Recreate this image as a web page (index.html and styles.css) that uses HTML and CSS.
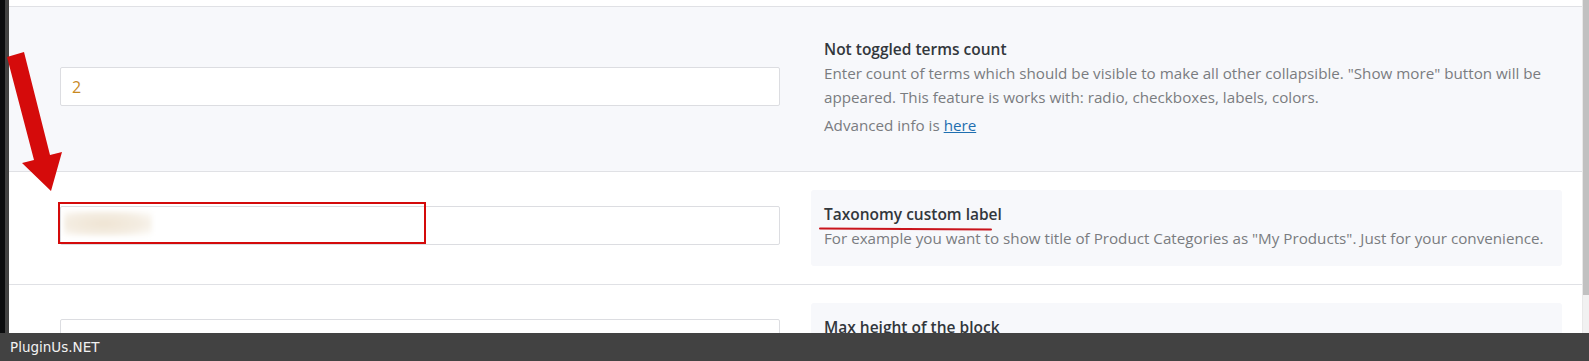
FILE: index.html
```html
<!DOCTYPE html>
<html lang="en">
<head>
    <meta charset="UTF-8">
    <meta name="viewport" content="width=device-width, initial-scale=1.0">
    <title>Filter options</title>
    <link rel="stylesheet" href="styles.css">
</head>
<body>
    <div class="frame">
        <div class="edge-dark"></div>
        <div class="edge-gray"></div>
        <div class="settings">
            <div class="prev-row"></div>

            <div class="option-row shaded">
                <div class="field">
                    <input type="text" class="text-input" value="2">
                </div>
                <div class="option-info">
                    <h4 class="option-title">Not toggled terms count</h4>
                    <p class="option-desc">Enter count of terms which should be visible to make all other collapsible. "Show more" button will be appeared. This feature is works with: radio, checkboxes, labels, colors.</p>
                    <p class="option-desc more">Advanced info is <a href="#">here</a></p>
                </div>
            </div>

            <div class="option-row">
                <div class="field">
                    <div class="text-input blurred-input"><span class="blurred"></span></div>
                    <span class="mark-box"></span>
                </div>
                <div class="option-info boxed">
                    <h4 class="option-title"><span class="underlined">Taxonomy custom label<span class="pen-line"></span></span></h4>
                    <p class="option-desc">For example you want to show title of Product Categories as "My Products". Just for your convenience.</p>
                </div>
            </div>

            <div class="option-row">
                <div class="field">
                    <input type="text" class="text-input" value="">
                </div>
                <div class="option-info boxed">
                    <h4 class="option-title">Max height of the block</h4>
                    <p class="option-desc">Container max-height (px). 0 means no max-height.</p>
                </div>
            </div>
        </div>
        <div class="scrollbar"><div class="thumb"></div></div>
    </div>

    <!-- annotation arrow drawn over the screenshot -->
    <svg class="arrow" width="70" height="200" viewBox="0 0 70 200">
        <polygon points="7,57 24,52 50,155 62,152 51,191 22,163 34,160" fill="#d50b0b"/>
    </svg>

    <div class="watermark">PluginUs.NET</div>
</body>
</html>
```

FILE: styles.css
```css
body {
    margin: 0;
    background-color: #fff;
    font-family: "Open Sans", sans-serif;
    overflow: hidden;
}
.frame {
    display: flex;
    height: 361px;
    overflow: hidden;
}
.edge-dark {
    width: 5px;
    background-color: #0b0c0e;
}
.edge-gray {
    width: 4px;
    background-color: #424242;
}
.settings {
    flex: 1;
    min-width: 0;
}
.prev-row {
    height: 6px;
    border-bottom: 1px solid #e0e1e5;
}
.option-row {
    display: grid;
    grid-template-columns: 720px 1fr;
    column-gap: 31px;
    align-items: center;
    padding: 18px 20px 18px 51px;
    border-bottom: 1px solid #e0e1e5;
    background-color: #fff;
}
.option-row.shaded {
    background-color: #f7f8fb;
}
.field {
    position: relative;
    margin-bottom: 5px;
}
.text-input {
    display: block;
    width: 100%;
    height: 39px;
    box-sizing: border-box;
    padding: 0 11px;
    border: 1px solid #dcdde1;
    border-radius: 2px;
    background-color: #fff;
    color: #c8891f;
    font-family: "Open Sans", sans-serif;
    font-size: 16px;
    outline: none;
}
.blurred-input {
    padding: 4px 3px;
}
.blurred {
    display: block;
    width: 88px;
    height: 25px;
    background: radial-gradient(ellipse at 45% 50%, #efe4d3 0%, #f4ede2 55%, #fff 100%);
    filter: blur(2px);
}
.mark-box {
    position: absolute;
    left: -2px;
    top: -4px;
    width: 368px;
    height: 42px;
    box-sizing: border-box;
    border: 2px solid #d40a0a;
}
.option-info {
    padding: 12px 13px 16px;
    border-radius: 3px;
}
.option-info.boxed {
    background-color: #f7f8fb;
}
.option-title {
    margin: 0;
    font-size: 15.5px;
    line-height: 24px;
    font-weight: 600;
    color: #32373c;
}
.option-desc {
    margin: 0;
    font-size: 15.2px;
    line-height: 24px;
    color: #7a7c80;
}
.option-desc.more {
    margin-top: 4px;
}
.option-desc a {
    color: #1f6fb0;
}
.underlined {
    position: relative;
}
.pen-line {
    position: absolute;
    left: -5px;
    right: 10px;
    bottom: -5px;
    height: 2px;
    background-color: #c9141c;
    border-radius: 1px;
    transform: rotate(0.3deg);
}
.scrollbar {
    width: 6px;
    background-color: #f1f1f1;
    border-left: 1px solid #e8e8e8;
}
.thumb {
    height: 295px;
    background-color: #c1c1c1;
}
.arrow {
    position: absolute;
    left: 0;
    top: 0;
}
.watermark {
    position: fixed;
    left: 0;
    right: 0;
    bottom: 0;
    height: 28px;
    padding-left: 10px;
    background-color: #424242;
    color: #f2f2f2;
    font-family: "DejaVu Sans", sans-serif;
    font-size: 13.5px;
    line-height: 28px;
}
```
